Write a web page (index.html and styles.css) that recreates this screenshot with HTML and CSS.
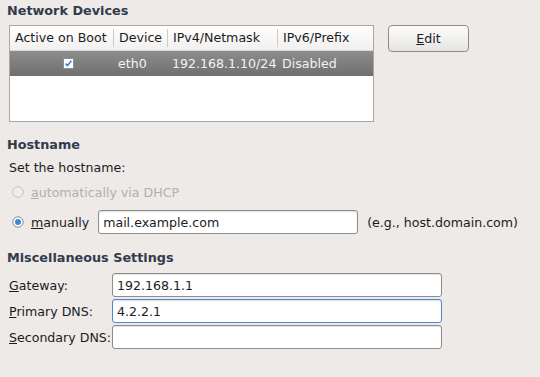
FILE: index.html
```html
<!DOCTYPE html>
<html lang="en">
<head>
    <meta charset="UTF-8">
    <title>Network Configuration</title>
    <link rel="stylesheet" href="styles.css">
</head>
<body>
    <div class="page">
        <h2 class="section-title first">Network Devices</h2>
        <div class="devices">
            <div class="device-list">
                <div class="list-row list-head">
                    <div class="cell col-boot">Active on Boot</div>
                    <div class="cell col-dev">Device</div>
                    <div class="cell col-ip4">IPv4/Netmask</div>
                    <div class="cell col-ip6">IPv6/Prefix</div>
                </div>
                <div class="list-row selected">
                    <div class="cell col-boot">
                        <svg class="check" width="11" height="11" viewBox="0 0 11 11">
                            <rect x="0.5" y="0.5" width="10" height="10" rx="1" fill="#fff" stroke="#8c8c8c"/>
                            <path d="M2.6 5.6 L4.5 7.6 L8.4 2.8" fill="none" stroke="#3d7fd6" stroke-width="1.6"/>
                        </svg>
                    </div>
                    <div class="cell col-dev">eth0</div>
                    <div class="cell col-ip4">192.168.1.10/24</div>
                    <div class="cell col-ip6">Disabled</div>
                </div>
            </div>
            <button class="btn"><u>E</u>dit</button>
        </div>

        <h2 class="section-title">Hostname</h2>
        <p class="hint-label">Set the hostname:</p>
        <div class="radio-row disabled">
            <svg class="radio" width="12" height="12" viewBox="0 0 12 12">
                <circle cx="6" cy="6" r="5.2" fill="#f0eeec" stroke="#c4c1be"/>
            </svg>
            <span><u>a</u>utomatically via DHCP</span>
        </div>
        <div class="radio-row manual">
            <svg class="radio" width="12" height="12" viewBox="0 0 12 12">
                <circle cx="6" cy="6" r="5.2" fill="#fff" stroke="#8c8c8c"/>
                <circle cx="6" cy="6" r="3" fill="#3d86d8"/>
            </svg>
            <span class="radio-text"><u>m</u>anually</span>
            <input class="field host-field" type="text" value="mail.example.com">
            <span class="example">(e.g., host.domain.com)</span>
        </div>

        <h2 class="section-title misc">Miscellaneous Settings</h2>
        <div class="misc-grid">
            <label><u>G</u>ateway:</label>
            <input class="field" type="text" value="192.168.1.1">
            <label><u>P</u>rimary DNS:</label>
            <input class="field focused" type="text" value="4.2.2.1">
            <label><u>S</u>econdary DNS:</label>
            <input class="field" type="text" value="">
        </div>
    </div>
</body>
</html>
```

FILE: styles.css
```css
body {
    margin: 0;
    background-color: #edeae8;
    font-family: 'DejaVu Sans', 'Liberation Sans', sans-serif;
    font-size: 12.6px;
    color: #1c1c1c;
}

.page {
    padding: 0 0 0 7px;
}

.section-title {
    margin: 15px 0 0 0;
    font-size: 12.8px;
    line-height: 16px;
    font-weight: bold;
    color: #323a4c;
}

.section-title.first {
    margin-top: 3px;
}

.section-title.misc {
    margin-top: 16px;
}

/* devices table + edit button */

.devices {
    display: flex;
    align-items: flex-start;
    gap: 14px;
    margin: 6px 0 0 2px;
}

.device-list {
    width: 363px;
    height: 95px;
    border: 1px solid #a9a7a5;
    background-color: #fff;
    overflow: hidden;
}

.list-row {
    display: flex;
    height: 25px;
    align-items: center;
}

.list-head {
    background: linear-gradient(#ffffff, #f1f0ef);
    border-bottom: 1px solid #d9d7d5;
    height: 24px;
}

.cell {
    box-sizing: border-box;
    flex-shrink: 0;
    padding-left: 5px;
    white-space: nowrap;
    overflow: hidden;
}

.list-head .cell {
    border-left: 1px solid #cfcdcb;
    line-height: 18px;
}

.list-head .cell:first-child {
    border-left: none;
}

.col-boot { width: 103px; }
.col-dev { width: 54px; }
.col-ip4 { width: 110px; }
.col-ip6 { width: 96px; }

.selected {
    background: linear-gradient(#8d8d8d, #6f6f6f);
    color: #f2f2f2;
}

.selected .col-boot {
    padding-left: 53px;
}

.check {
    display: block;
}

.btn {
    width: 81px;
    height: 27px;
    border: 1px solid #8e8c8a;
    border-radius: 4px;
    background: linear-gradient(#fdfdfd, #e6e4e2);
    font-family: inherit;
    font-size: 12.6px;
    color: #1c1c1c;
    padding: 0;
}

/* hostname */

.hint-label {
    margin: 7px 0 0 2px;
    line-height: 16px;
}

.radio-row {
    display: flex;
    align-items: center;
    margin-left: 5px;
}

.radio {
    margin-right: 7px;
    flex-shrink: 0;
}

.radio-row.disabled {
    margin-top: 8px;
    height: 16px;
    color: #b3b0ad;
}

.radio-row.manual {
    margin-top: 10px;
    height: 24px;
}

.radio-text {
    margin-right: 9px;
}

.field {
    box-sizing: border-box;
    height: 24px;
    border: 1px solid #8f8d8b;
    border-radius: 3px;
    background-color: #fff;
    box-shadow: inset 0 1px 1px rgba(0, 0, 0, 0.12);
    font-family: inherit;
    font-size: 12.6px;
    color: #1c1c1c;
    padding: 0 4px;
    outline: none;
}

.host-field {
    width: 260px;
}

.example {
    margin-left: 9px;
}

/* misc */

.misc-grid {
    display: grid;
    grid-template-columns: 103px 330px;
    row-gap: 2px;
    align-items: center;
    margin: 7px 0 0 2px;
}

.misc-grid label {
    white-space: nowrap;
}

.misc-grid .field {
    width: 330px;
}

.field.focused {
    border-color: #4a8ad4;
}
```
